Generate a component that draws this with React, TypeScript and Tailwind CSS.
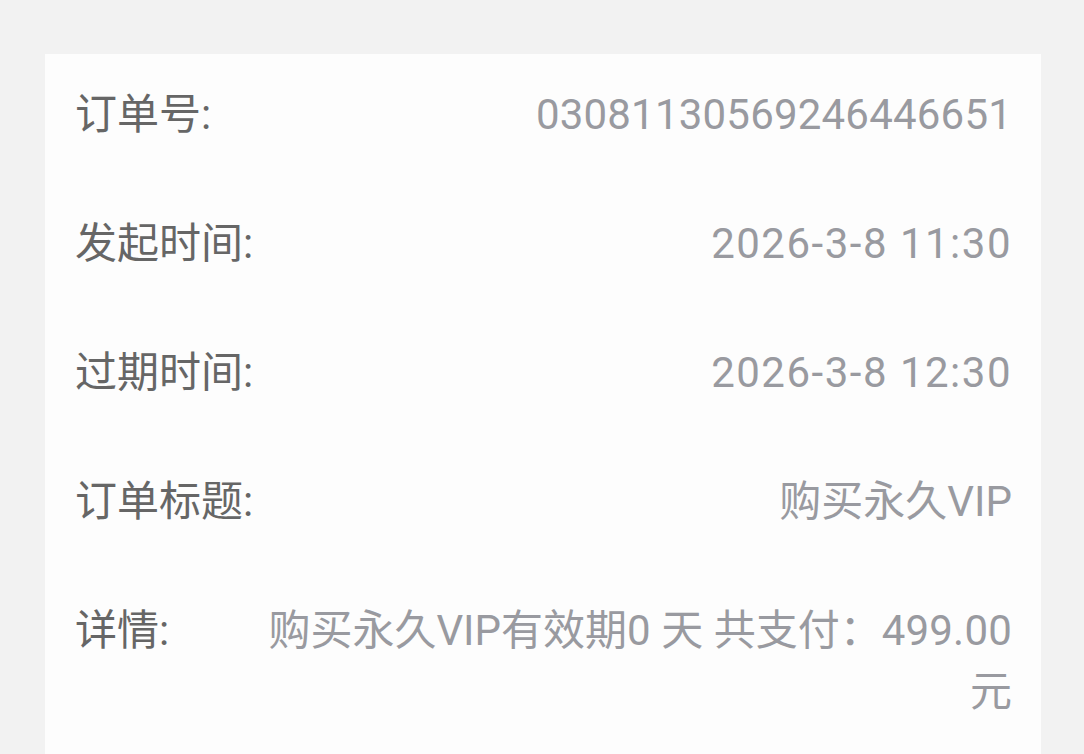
const Num = ({ children, t = 'tracking-[0.2px]' }: { children: React.ReactNode; t?: string }) => (
  <span className={t}>{children}</span>
)

const Row = ({ label, children }: { label: string; children: React.ReactNode }) => (
  <div className="flex items-start">
    <div className="w-[182px] shrink-0 text-[#666666]">{label}</div>
    <div className="flex-1 text-right text-[#999aa0]">{children}</div>
  </div>
)

const App = () => {
  return (
    <div
      className="min-h-screen bg-[#f2f2f2] pl-[45px] pr-[43px] pt-[54px]"
      style={{ fontFamily: 'Roboto, "Noto Sans CJK SC", sans-serif' }}
    >
      <div className="flex min-h-[760px] flex-col gap-[68px] bg-[#fdfdfd] pl-[30px] pr-[29px] pt-[30px] text-[42px] leading-[61px]">
        <Row label="订单号:">
          <Num>03081130569246446651</Num>
        </Row>
        <Row label="发起时间:">
          <Num t="tracking-[1.5px]">2026-3-8 11:30</Num>
        </Row>
        <Row label="过期时间:">
          <Num t="tracking-[1.5px]">2026-3-8 12:30</Num>
        </Row>
        <Row label="订单标题:">购买永久VIP</Row>
        <Row label="详情:">
          购买永久VIP有效期<Num>0</Num> 天 共支付：<Num>499.00</Num> 元
        </Row>
      </div>
    </div>
  )
}

export default App
